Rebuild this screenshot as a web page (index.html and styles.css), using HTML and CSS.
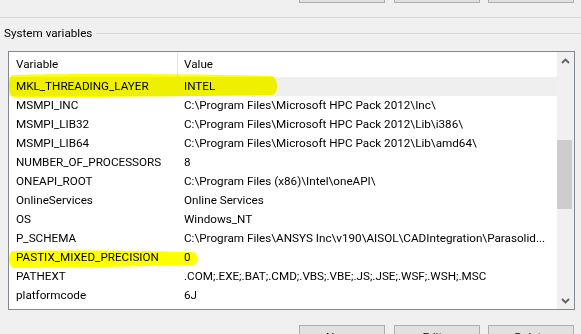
FILE: index.html
```html
<!DOCTYPE html>
<html>
<head>
<meta charset="utf-8">
<link rel="stylesheet" href="styles.css">
</head>
<body>
<div class="btnrow top">
  <button class="btn" aria-label="New"></button>
  <button class="btn gap8" aria-label="Edit"></button>
  <button class="btn gap7" aria-label="Delete"></button>
</div>
<div class="user-group-end"></div>
<div class="legend">
  <span class="legend-text">System variables</span>
  <span class="legend-line"></span>
</div>
<div class="listbox">
  <div class="list-content">
    <div class="row header">
      <div class="c1 hc">Variable</div>
      <div class="c2">Value</div>
    </div>
    <div class="row selected"><div class="c1">MKL_THREADING_LAYER</div><div class="c2">INTEL</div></div>
    <div class="row"><div class="c1">MSMPI_INC</div><div class="c2">C:\Program Files\Microsoft HPC Pack 2012\Inc\</div></div>
    <div class="row"><div class="c1">MSMPI_LIB32</div><div class="c2">C:\Program Files\Microsoft HPC Pack 2012\Lib\i386\</div></div>
    <div class="row"><div class="c1">MSMPI_LIB64</div><div class="c2">C:\Program Files\Microsoft HPC Pack 2012\Lib\amd64\</div></div>
    <div class="row"><div class="c1">NUMBER_OF_PROCESSORS</div><div class="c2">8</div></div>
    <div class="row"><div class="c1">ONEAPI_ROOT</div><div class="c2">C:\Program Files (x86)\Intel\oneAPI\</div></div>
    <div class="row"><div class="c1">OnlineServices</div><div class="c2">Online Services</div></div>
    <div class="row"><div class="c1">OS</div><div class="c2">Windows_NT</div></div>
    <div class="row"><div class="c1">P_SCHEMA</div><div class="c2">C:\Program Files\ANSYS Inc\v190\AISOL\CADIntegration\Parasolid...</div></div>
    <div class="row"><div class="c1">PASTIX_MIXED_PRECISION</div><div class="c2">0</div></div>
    <div class="row"><div class="c1">PATHEXT</div><div class="c2">.COM;.EXE;.BAT;.CMD;.VBS;.VBE;.JS;.JSE;.WSF;.WSH;.MSC</div></div>
    <div class="row"><div class="c1">platformcode</div><div class="c2">6J</div></div>
  </div>
  <div class="scrollbar">
    <div class="sb-btn"><svg width="9" height="6" viewBox="0 0 9 6"><path d="M1 5 L4.5 1.5 L8 5" fill="none" stroke="#606060" stroke-width="1.8"/></svg></div>
    <div class="sb-track"><div class="sb-thumb"></div></div>
    <div class="sb-btn"><svg width="9" height="6" viewBox="0 0 9 6"><path d="M1 1 L4.5 4.5 L8 1" fill="none" stroke="#606060" stroke-width="1.8"/></svg></div>
  </div>
</div>
<div class="btnrow bottom">
  <button class="btn">New...</button>
  <button class="btn gap8">Edit...</button>
  <button class="btn gap7">Delete</button>
</div>
<svg class="marker" width="581" height="334" viewBox="0 0 581 334">
  <path d="M12 75 C 60 73.5 180 73.5 271 76 C 279 77 279 94 272 95 C 190 96 70 97.5 13 97 C 8 95 8 78 12 75 Z" fill="#ffff00"/>
  <path d="M12 251 C 60 250 140 250.5 193 252 C 199 253 199 264 193 265 C 140 266 60 268 13 268 C 8 266 8 253 12 251 Z" fill="#ffff00"/>
</svg>
</body>
</html>
```
FILE: styles.css
```css
html, body {
  margin: 0;
  padding: 0;
}
body {
  width: 581px;
  height: 334px;
  overflow: hidden;
  position: relative;
  background: #f0f0f0;
  font-family: Roboto, "Liberation Sans", sans-serif;
  font-size: 11.7px;
  color: #000;
}
.btnrow {
  display: flex;
  padding-left: 299px;
}
.btnrow.top {
  height: 3px;
  align-items: flex-end;
}
.btnrow.bottom {
  margin-top: 15px;
}
.btn {
  box-sizing: border-box;
  width: 86px;
  height: 23px;
  flex: none;
  margin: 0;
  padding: 0;
  background: #e1e1e1;
  border: 1px solid #adadad;
  font-family: inherit;
  font-size: 11.7px;
  color: #000;
}
.gap8 { margin-left: 9px; }
.gap7 { margin-left: 8px; }
.user-group-end {
  height: 14px;
  border-bottom: 1px solid #dcdcdc;
}
.legend {
  display: flex;
  align-items: center;
  height: 15px;
  margin-top: 8px;
}
.legend-text {
  padding-left: 4px;
  line-height: 15px;
}
.legend-line {
  flex: 1;
  height: 1px;
  background: #dcdcdc;
  margin-left: 4px;
}
.listbox {
  box-sizing: border-box;
  margin-top: 10px;
  margin-left: 8px;
  width: 567px;
  height: 259px;
  border: 1px solid #828790;
  background: #fff;
  display: flex;
}
.list-content {
  width: 548px;
  flex: none;
  overflow: hidden;
}
.row {
  display: flex;
  height: 19px;
  line-height: 19px;
  white-space: nowrap;
}
.row.header {
  height: 25px;
  line-height: 25px;
}
.row.selected {
  background: #efefef;
}
.c1 {
  box-sizing: border-box;
  width: 169px;
  flex: none;
  padding-left: 7px;
  overflow: hidden;
}
.c1.hc {
  border-right: 1px solid #e5e5e5;
}
.c2 {
  flex: 1;
  min-width: 0;
  padding-left: 6px;
  overflow: hidden;
  text-overflow: ellipsis;
}
.scrollbar {
  width: 17px;
  flex: none;
  background: #f0f0f0;
  display: flex;
  flex-direction: column;
}
.sb-btn {
  height: 17px;
  flex: none;
  display: flex;
  align-items: center;
  justify-content: center;
}
.sb-track {
  flex: 1;
}
.sb-thumb {
  width: 15px;
  height: 69px;
  margin-top: 71px;
  background: #cdcdcd;
}
.marker {
  position: absolute;
  left: 0;
  top: 0;
  pointer-events: none;
  mix-blend-mode: multiply;
}
```
